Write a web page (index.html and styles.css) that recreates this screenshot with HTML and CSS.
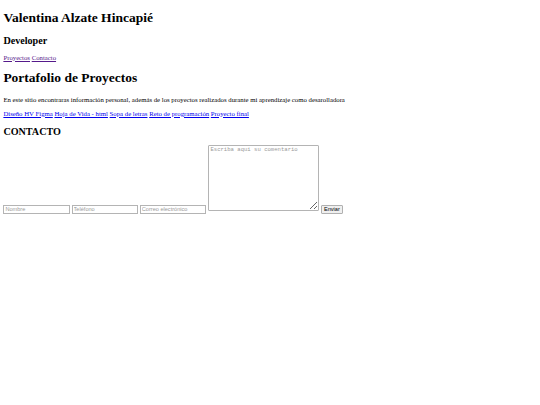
FILE: index.html
```html
<!DOCTYPE html>
<html lang="es">
<head>
<meta charset="utf-8">
<title>Valentina Alzate Hincapié</title>
<link rel="stylesheet" href="styles.css">
</head>
<body>
<header class="header">
<h1 class="title">Valentina Alzate Hincapié</h1>
<h2 class="subtitle">Developer</h2>
<nav class="nav"><a class="visited" href="#proyectos">Proyectos</a> <a class="visited" href="#contacto">Contacto</a></nav>
</header>
<section id="proyectos">
<h1 class="title section-head">Portafolio de Proyectos</h1>
<p class="text">En este sitio encontraras información personal, además de los proyectos realizados durante mi aprendizaje como desarolladora</p>
<p class="text"><a href="#a">Diseño HV Figma</a> <a href="#b">Hoja de Vida - html</a> <a href="#c">Sopa de letras</a> <a href="#d">Reto de programación</a> <a href="#e">Proyecto final</a></p>
</section>
<section id="contacto">
<h2 class="contact-head">CONTACTO</h2>
<form class="form">
<input class="field" type="text" placeholder="Nombre">
<input class="field" type="text" placeholder="Teléfono">
<input class="field" type="text" placeholder="Correo electrónico">
<textarea class="comment" placeholder="Escriba aqui su comentario"></textarea>
<button class="send" type="button">Enviar</button>
</form>
</section>
</body>
</html>
```
FILE: styles.css
```css
body {
  margin: 1.4px 3.375px 3.375px;
  font-family: "Liberation Serif", "Times New Roman", serif;
  font-size: 6.75px;
  line-height: normal;
  color: #000;
  background: #fff;
}
.title {
  font-size: 13.5px;
  font-weight: bold;
  margin: 9.05px 0;
}
.subtitle {
  font-size: 10.125px;
  font-weight: bold;
  margin: 6.6px 0 7.4px;
}
.section-head {
  margin-bottom: 10px;
}
.contact-head {
  font-size: 10.125px;
  font-weight: bold;
  margin: 9.2px 0 8.4px;
}
.nav {
  display: block;
}
.text {
  margin: 6.75px 0;
}
a {
  color: #0000ee;
  text-decoration: underline;
}
a.visited {
  color: #551a8b;
}
.form {
  margin: 0;
}
.field {
  box-sizing: border-box;
  width: 66.5px;
  height: 9px;
  margin: 0;
  padding: 0 1px;
  border: 1px solid #b4b4b4;
  border-radius: 0;
  font-family: "Liberation Sans", Arial, sans-serif;
  font-size: 5.6px;
  background: #fff;
}
.field::placeholder {
  color: #9a9a9a;
}
.comment {
  box-sizing: border-box;
  width: 111px;
  height: 66px;
  margin: 0;
  padding: 1px 1.5px;
  border: 1px solid #b4b4b4;
  border-radius: 1px;
  font-family: "Liberation Mono", "Courier New", monospace;
  font-size: 5.6px;
  line-height: 6.3px;
  background: #fff;
}
.comment::placeholder {
  color: #9a9a9a;
}
.send {
  box-sizing: border-box;
  width: 22.5px;
  height: 9px;
  margin: 0;
  padding: 0;
  border: 1px solid #b0b0b0;
  border-radius: 1px;
  background: #efefef;
  font-family: "Liberation Sans", Arial, sans-serif;
  font-size: 5.6px;
  color: #000;
}
```
